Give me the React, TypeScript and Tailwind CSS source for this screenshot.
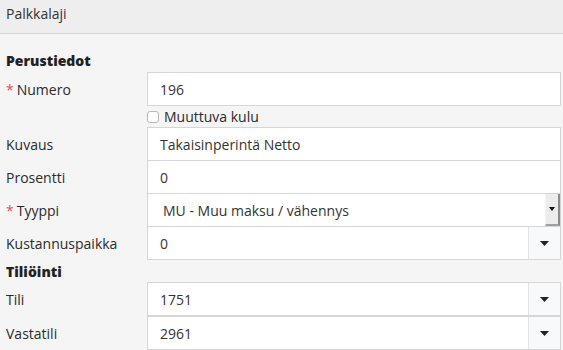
import React from "react";

const font = { fontFamily: '"Open Sans", "Liberation Sans", sans-serif' };

function Caret({ small }: { small?: boolean }) {
  return small ? (
    <svg width="6" height="4" viewBox="0 0 6 4">
      <path d="M0 0h6L3 4z" fill="#111" />
    </svg>
  ) : (
    <svg width="9" height="5" viewBox="0 0 9 5">
      <path d="M0 0h9L4.5 5z" fill="#222" />
    </svg>
  );
}

function Label({ text, required }: { text: string; required?: boolean }) {
  return (
    <div className="w-[141px] shrink-0 text-[14px] text-[#2b2b2b]">
      {required && <span className="text-[#d9534f] mr-[3px]">*</span>}
      {text}
    </div>
  );
}

function TextRow({ label, value, required, first }: { label: string; value: string; required?: boolean; first?: boolean }) {
  return (
    <div className={`flex items-center h-[34px] ${first ? "" : "-mt-px"}`}>
      <Label text={label} required={required} />
      <div className="flex-1 h-full bg-white border border-[#d6d6d8] flex items-center pl-[12px] text-[14px] text-[#333]">
        {value}
      </div>
    </div>
  );
}

function ComboRow({ label, value, first }: { label: string; value: string; first?: boolean }) {
  return (
    <div className={`flex items-center h-[34px] ${first ? "" : "-mt-px"}`}>
      <Label text={label} />
      <div className="flex-1 h-full bg-white border border-[#d6d6d8] flex">
        <div className="flex-1 flex items-center pl-[12px] text-[14px] text-[#333]">{value}</div>
        <div className="w-[32px] border-l border-[#e2e3e5] bg-[#f8f9fa] flex items-center justify-center">
          <Caret />
        </div>
      </div>
    </div>
  );
}

export default function App() {
  return (
    <div className="w-[563px] h-[350px] bg-[#f5f5f5] overflow-hidden" style={font}>
      <div className="h-[34px] bg-[#eeeeee] border-b border-[#d4d4d4] flex items-start pt-[3px] px-[6px] text-[14px] text-[#333]">
        Palkkalaji
      </div>
      <div className="pl-[6px] pr-[2px]">
        <div className="h-[38px] flex items-end pb-[1px] text-[14px] font-black text-[#222]">Perustiedot</div>
        <TextRow label="Numero" value="196" required first />
        <div className="flex items-center h-[21px] pl-[141px]">
          <span className="w-[12px] h-[12px] rounded-[3px] border border-[#b8b8b8] bg-white mr-[5px]" />
          <span className="text-[14px] text-[#2b2b2b]">Muuttuva kulu</span>
        </div>
        <TextRow label="Kuvaus" value="Takaisinperintä Netto" first />
        <TextRow label="Prosentti" value="0" />
        <div className="flex items-center h-[34px] -mt-px">
          <Label text="Tyyppi" required />
          <div className="flex-1 h-full bg-white border border-[#d6d6d8] flex">
            <div className="flex-1 flex items-center pl-[15px] text-[14px] text-[#333]">MU - Muu maksu / vähennys</div>
            <div className="w-[15px] bg-[#ececec] border-l border-[#f5f5f5] border-r-2 border-b-2 border-r-[#8a8a8a] border-b-[#a0a0a0] flex items-center justify-center">
              <Caret small />
            </div>
          </div>
        </div>
        <ComboRow label="Kustannuspaikka" value="0" />
        <div className="h-[22px] flex items-center text-[14px] font-black text-[#222]">Tiliöinti</div>
        <ComboRow label="Tili" value="1751" first />
        <ComboRow label="Vastatili" value="2961" first />
      </div>
    </div>
  );
}
